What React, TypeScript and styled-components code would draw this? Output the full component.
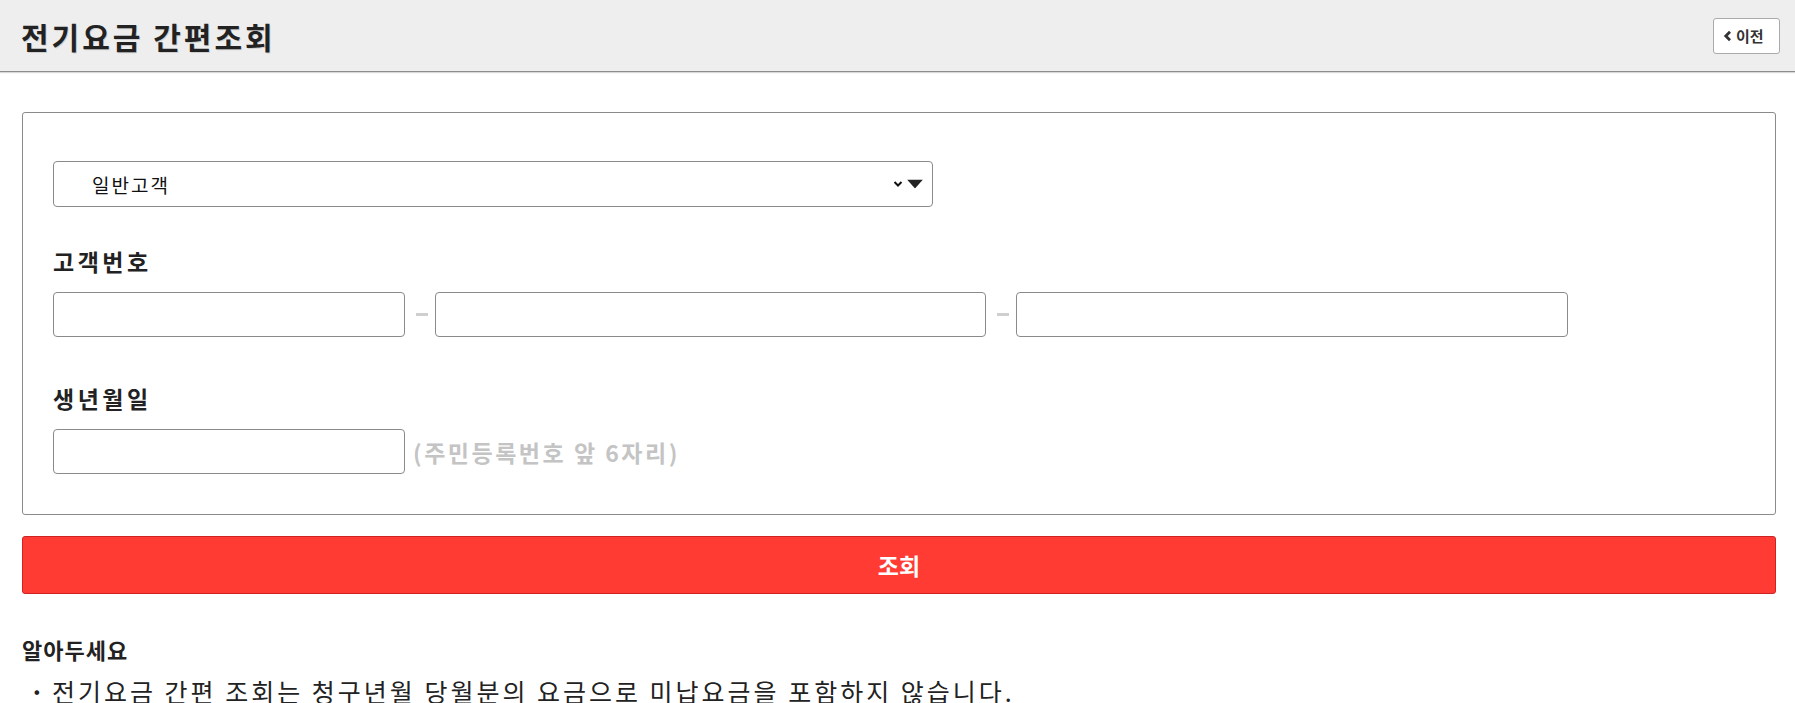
import React from "react";
import styled, { createGlobalStyle } from "styled-components";

const GlobalStyle = createGlobalStyle`
  html, body {
    margin: 0;
    padding: 0;
    background: #fff;
  }
  body {
    font-family: "Noto Sans CJK KR", "Noto Sans", sans-serif;
    color: #222;
    overflow: hidden;
  }
  * { box-sizing: border-box; }
`;

const Header = styled.header`
  height: 72px;
  display: flex;
  align-items: center;
  justify-content: space-between;
  padding: 0 15px 0 21px;
  background: #eeeeee;
  border-bottom: 1px solid #8c8c8c;
  box-shadow: 0 1px 1px rgba(0, 0, 0, 0.15);
`;

const Title = styled.h1`
  margin: 0;
  font-size: 30px;
  font-weight: 700;
  letter-spacing: 3px;
  color: #222;
  text-shadow: 1px 1px 0 rgba(0, 0, 0, 0.15);
`;

const BackButton = styled.button`
  display: flex;
  align-items: center;
  gap: 4px;
  height: 36px;
  width: 67px;
  padding: 0 0 0 9px;
  border: 1px solid #aaa;
  border-radius: 3px;
  background: #fff;
  font-family: inherit;
  font-size: 15px;
  font-weight: 700;
  color: #333;
  cursor: pointer;
`;

const Content = styled.main`
  padding: 40px 19px 0 22px;
`;

const FormBox = styled.section`
  border: 1px solid #8a8a8a;
  border-radius: 3px;
  padding: 48px 30px 40px;
`;

const SelectWrap = styled.div`
  position: relative;
  width: 880px;
`;

const Select = styled.select`
  appearance: none;
  width: 100%;
  height: 46px;
  border: 1px solid #8a8a8a;
  border-radius: 4px;
  background: #fff;
  padding: 0 0 0 38px;
  font-family: inherit;
  font-size: 19px;
  letter-spacing: 2px;
  color: #111;
`;

const SelectIcons = styled.span`
  position: absolute;
  right: 10px;
  top: 50%;
  transform: translateY(-50%);
  display: flex;
  align-items: center;
  gap: 4px;
  pointer-events: none;
`;

const Label = styled.div<{ $top: number }>`
  margin-top: ${(p) => p.$top}px;
  margin-bottom: 16px;
  font-size: 23px;
  line-height: 30px;
  font-weight: 700;
  letter-spacing: 3.5px;
  color: #222;
`;

const Row = styled.div`
  display: flex;
  align-items: center;
`;

const Input = styled.input<{ $w: number }>`
  width: ${(p) => p.$w}px;
  height: 45px;
  border: 1px solid #8a8a8a;
  border-radius: 4px;
  background: #fff;
  padding: 0 10px;
  font-family: inherit;
  font-size: 18px;
`;

const Dash = styled.span`
  display: block;
  width: 12px;
  height: 3px;
  margin: 0 7px 0 11px;
  background: #cfcfcf;
`;

const Hint = styled.span`
  margin-left: 8px;
  font-size: 23px;
  font-weight: 700;
  letter-spacing: 2.5px;
  color: #c4c4c4;
`;

const SubmitButton = styled.button`
  display: block;
  width: 100%;
  height: 58px;
  margin-top: 21px;
  border: 1px solid #cf2222;
  border-radius: 3px;
  background: #ff3b33;
  color: #fff;
  font-family: inherit;
  font-size: 23px;
  font-weight: 700;
  cursor: pointer;
`;

const NoticeTitle = styled.h2`
  margin: 40px 0 0;
  font-size: 22px;
  line-height: 30px;
  font-weight: 700;
  letter-spacing: 1px;
  color: #222;
`;

const NoticeList = styled.ul`
  margin: 10px 0 0;
  padding: 0;
  list-style: none;
`;

const NoticeItem = styled.li`
  display: flex;
  font-size: 25px;
  line-height: 34px;
  font-weight: 400;
  letter-spacing: 3px;
  color: #222;
  &::before {
    content: "·";
    display: block;
    flex: none;
    width: 30px;
    text-align: center;
    font-weight: 700;
    letter-spacing: 0;
  }
`;

function ChevronLeft() {
  return (
    <svg width="9" height="12" viewBox="0 0 9 12">
      <path d="M7 1.8 L2.8 6 L7 10.2" fill="none" stroke="#333" strokeWidth="2.8" />
    </svg>
  );
}

function SelectArrows() {
  return (
    <SelectIcons>
      <svg width="10" height="7" viewBox="0 0 10 7">
        <path d="M1.5 1.5 L5 5 L8.5 1.5" fill="none" stroke="#111" strokeWidth="2" />
      </svg>
      <svg width="16" height="9" viewBox="0 0 16 9">
        <path d="M0 0 H16 L8 9 Z" fill="#222" />
      </svg>
    </SelectIcons>
  );
}

export default function App() {
  return (
    <>
      <GlobalStyle />
      <Header>
        <Title>전기요금 간편조회</Title>
        <BackButton type="button">
          <ChevronLeft />
          이전
        </BackButton>
      </Header>
      <Content>
        <FormBox>
          <SelectWrap>
            <Select defaultValue="general">
              <option value="general">일반고객</option>
              <option value="corp">법인고객</option>
            </Select>
            <SelectArrows />
          </SelectWrap>

          <Label $top={39}>고객번호</Label>
          <Row>
            <Input $w={352} />
            <Dash />
            <Input $w={551} />
            <Dash />
            <Input $w={552} />
          </Row>

          <Label $top={46}>생년월일</Label>
          <Row>
            <Input $w={352} maxLength={6} />
            <Hint>(주민등록번호 앞 6자리)</Hint>
          </Row>
        </FormBox>

        <SubmitButton type="button">조회</SubmitButton>

        <NoticeTitle>알아두세요</NoticeTitle>
        <NoticeList>
          <NoticeItem>전기요금 간편 조회는 청구년월 당월분의 요금으로 미납요금을 포함하지 않습니다.</NoticeItem>
        </NoticeList>
      </Content>
    </>
  );
}
